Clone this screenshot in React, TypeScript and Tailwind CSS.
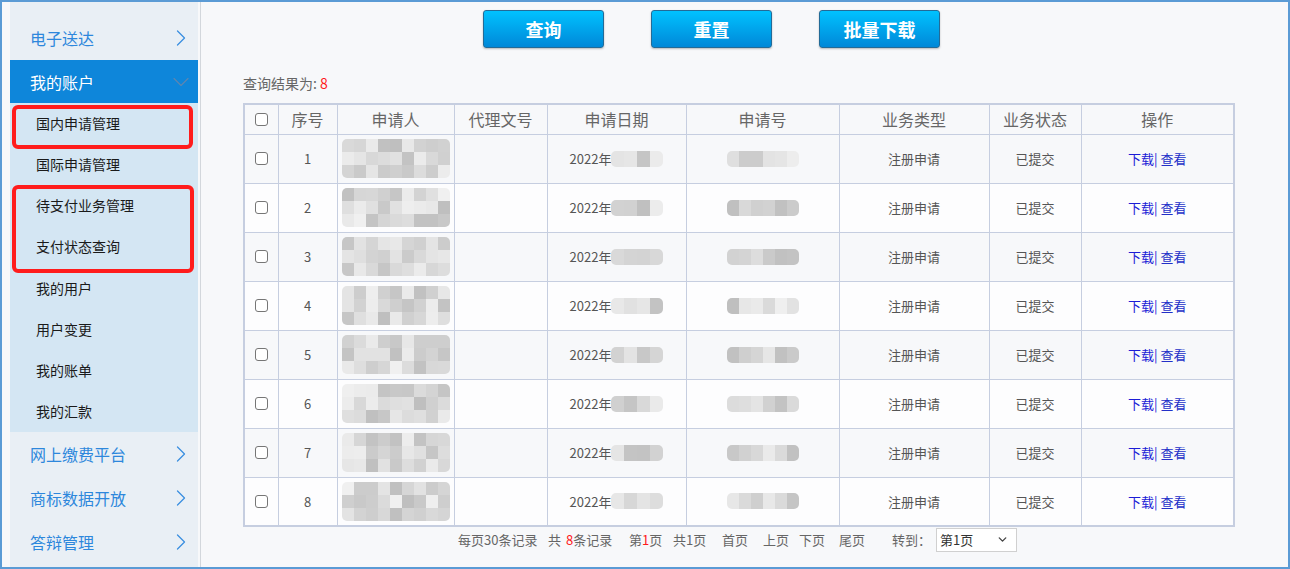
import { ChevronRight, ChevronDown } from "lucide-react"

const topItems = ["电子送达"]
const subItems = ["国内申请管理", "国际申请管理", "待支付业务管理", "支付状态查询", "我的用户", "用户变更", "我的账单", "我的汇款"]
const bottomItems = ["网上缴费平台", "商标数据开放", "答辩管理"]

const headers = ["序号", "申请人", "代理文号", "申请日期", "申请号", "业务类型", "业务状态", "操作"]
const widths = ["w-[34px]", "w-[59px]", "w-[117px]", "w-[93px]", "w-[139px]", "w-[153px]", "w-[150px]", "w-[92px]", "w-[153px]"]

function shade(seed: number, i: number) {
  const x = Math.sin(seed * 97.3 + i * 13.7) * 10000
  const f = x - Math.floor(x)
  const v = Math.round(190 + f * 50)
  return `rgb(${v},${v},${v})`
}

// pixelated blur placeholder for masked data
function Mosaic({ cols, rows, seed, cell }: { cols: number; rows: number; seed: number; cell: string }) {
  return (
    <div className="grid blur-[0.6px] rounded-[5px] overflow-hidden" style={{ gridTemplateColumns: `repeat(${cols}, auto)` }}>
      {Array.from({ length: cols * rows }).map((_, i) => (
        <div key={i} className={cell} style={{ background: shade(seed, i) }} />
      ))}
    </div>
  )
}

function Checkbox() {
  return <div className="mx-auto w-[13px] h-[13px] rounded-[3px] border border-[#767676] bg-white" />
}

export default function App() {
  return (
    <div className="w-[1290px] h-[569px] border-2 border-[#5b9bd5] flex bg-[#f7f8fa] font-['Noto_Sans_CJK_SC',sans-serif] overflow-hidden">
      {/* sidebar */}
      <div className="relative w-[199px] shrink-0 pl-[8px] border-r border-[#d3d7dc] bg-[#f7f8fa]">
        <div className="w-[188px] h-full bg-[#e9eff5] pt-[14px]">
          {topItems.map((t) => (
            <div key={t} className="h-[44px] flex items-center justify-between pl-[20px] pr-[3px] text-[16px] text-[#2d87dc]">
              {t}
              <ChevronRight size={28} strokeWidth={1.1} className="text-[#3b8fe0]" />
            </div>
          ))}
          <div className="h-[43px] flex items-center justify-between pl-[20px] pr-[3px] text-[16px] text-white bg-[#0e86da]">
            我的账户
            <ChevronDown size={28} strokeWidth={1} className="text-[#5d86b0]" />
          </div>
          <div className="bg-[#d4e6f3]">
            {subItems.map((t) => (
              <div key={t} className="h-[41.125px] flex items-center pl-[26px] text-[14px] text-[#1a1a1a]">
                {t}
              </div>
            ))}
          </div>
          {bottomItems.map((t) => (
            <div key={t} className="h-[44px] flex items-center justify-between pl-[20px] pr-[3px] text-[16px] text-[#2d87dc]">
              {t}
              <ChevronRight size={28} strokeWidth={1.1} className="text-[#3b8fe0]" />
            </div>
          ))}
        </div>
        <div className="absolute left-[10px] top-[103px] w-[181px] h-[44px] border-4 border-[#ff1c1c] rounded-[6px]" />
        <div className="absolute left-[10px] top-[183px] w-[182px] h-[88px] border-4 border-[#ff1c1c] rounded-[6px]" />
      </div>

      {/* main */}
      <div className="flex-1 pl-[42px] pt-[8px]">
        <div className="flex gap-[47px] ml-[240px]">
          {["查询", "重置", "批量下载"].map((b) => (
            <button
              key={b}
              className="w-[121px] h-[38px] rounded-[3px] border border-[#236b97] bg-linear-to-b from-[#00c2ff] to-[#0088d8] text-white text-[18px] font-bold shadow-[0_1px_2px_rgba(0,0,0,0.25)]"
            >
              {b}
            </button>
          ))}
        </div>

        <div className="mt-[27px] text-[14px] leading-[16px] text-[#666]">
          查询结果为: <span className="text-[#ff1a1a]">8</span>
        </div>

        <table className="mt-[12px] w-[990px] table-fixed border-collapse border-2 border-[#c6cee0] text-[13px] text-[#555]">
          <colgroup>
            {widths.map((w, i) => (
              <col key={i} className={w} />
            ))}
          </colgroup>
          <thead>
            <tr className="h-[30px] bg-[#f7f8fa]">
              <th className="border border-[#c6cee0] font-normal">
                <Checkbox />
              </th>
              {headers.map((h) => (
                <th key={h} className="border border-[#c6cee0] font-normal text-[16px] text-[#666]">
                  {h}
                </th>
              ))}
            </tr>
          </thead>
          <tbody>
            {Array.from({ length: 8 }).map((_, r) => (
              <tr key={r} className={`h-[49px] ${r % 2 === 0 ? "bg-[#f7f8fa]" : "bg-[#fdfdfe]"}`}>
                <td className="border border-[#c6cee0]">
                  <Checkbox />
                </td>
                <td className="border border-[#c6cee0] text-center">{r + 1}</td>
                <td className="border border-[#c6cee0]">
                  <div className="flex justify-center">
                    <Mosaic cols={9} rows={3} seed={r + 1} cell="w-[12px] h-[13px]" />
                  </div>
                </td>
                <td className="border border-[#c6cee0]" />
                <td className="border border-[#c6cee0]">
                  <div className="flex items-center justify-center">
                    <span>2022年</span>
                    <Mosaic cols={4} rows={1} seed={r + 20} cell="w-[13px] h-[16px]" />
                  </div>
                </td>
                <td className="border border-[#c6cee0]">
                  <div className="flex justify-center">
                    <Mosaic cols={6} rows={1} seed={r + 40} cell="w-[12px] h-[16px]" />
                  </div>
                </td>
                <td className="border border-[#c6cee0] text-center">注册申请</td>
                <td className="border border-[#c6cee0] text-center">已提交</td>
                <td className="border border-[#c6cee0] text-center text-[#1c1cd6]">
                  下载| <span className="text-[#2330c8]">查看</span>
                </td>
              </tr>
            ))}
          </tbody>
        </table>

        <div className="w-[990px] h-[25px] flex items-center pl-[215px] text-[13px] text-[#666] whitespace-nowrap">
          <span className="w-[90px]">每页30条记录</span>
          <span className="w-[81px]">
            共 <span className="ml-[2px] text-[#ff1a1a]">8</span>条记录
          </span>
          <span className="w-[44px]">
            第<span className="text-[#ff1a1a]">1</span>页
          </span>
          <span className="w-[49px]">共1页</span>
          <span className="w-[41px]">首页</span>
          <span className="w-[36px]">上页</span>
          <span className="w-[40px]">下页</span>
          <span className="w-[53px]">尾页</span>
          <span className="w-[44px]">转到：</span>
          <div className="w-[81px] h-[24px] bg-white border border-[#d0d0d0] flex items-center justify-between pl-[3px] pr-[7px] text-[#333]">
            第1页
            <ChevronDown size={13} strokeWidth={2.5} className="text-[#444]" />
          </div>
        </div>
      </div>
    </div>
  )
}
